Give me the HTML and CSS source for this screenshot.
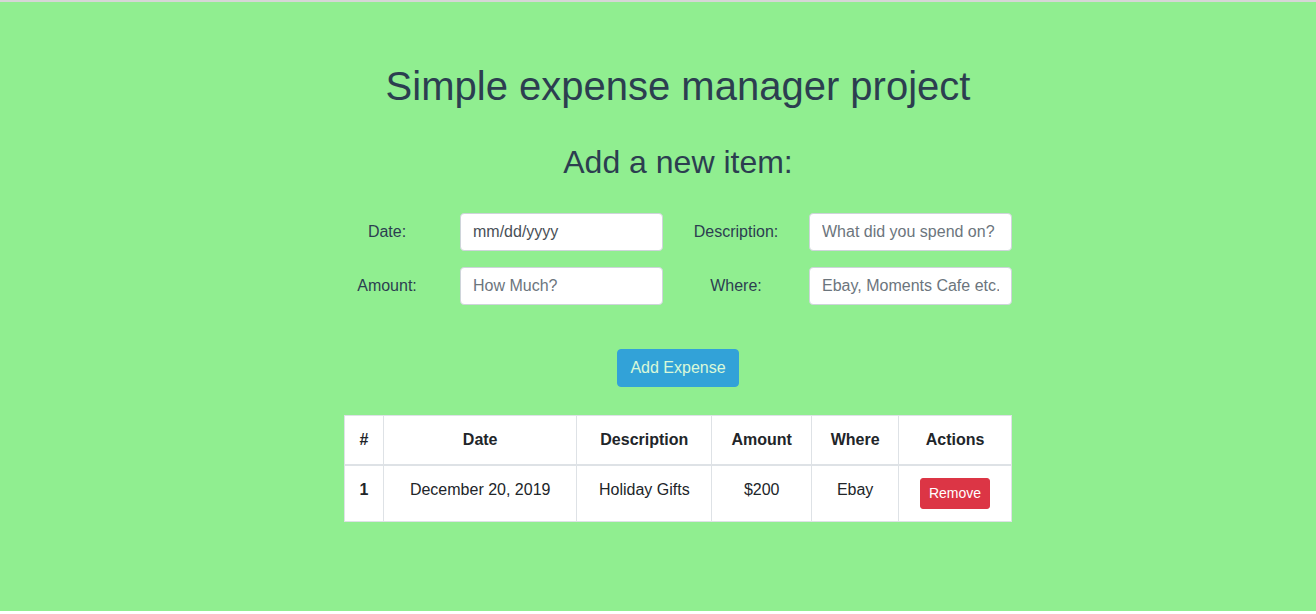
FILE: index.html
```html
<!DOCTYPE html>
<html lang="en">
<head>
<meta charset="utf-8">
<title>Simple expense manager project</title>
<link rel="stylesheet" href="styles.css">
</head>
<body>
<div class="frame">
  <main class="app">
    <h1 class="title">Simple expense manager project</h1>
    <h2 class="subtitle">Add a new item:</h2>
    <form class="form">
      <label class="label" for="date">Date:</label>
      <input class="control control-date" id="date" type="text" placeholder="mm/dd/yyyy">
      <label class="label" for="desc">Description:</label>
      <input class="control" id="desc" type="text" placeholder="What did you spend on?">
      <label class="label" for="amount">Amount:</label>
      <input class="control" id="amount" type="text" placeholder="How Much?">
      <label class="label" for="where">Where:</label>
      <input class="control" id="where" type="text" placeholder="Ebay, Moments Cafe etc.">
    </form>
    <button class="btn-add" type="button" disabled>Add Expense</button>
    <table class="table">
      <thead>
        <tr>
          <th class="c-num">#</th>
          <th class="c-date">Date</th>
          <th class="c-desc">Description</th>
          <th class="c-amt">Amount</th>
          <th class="c-where">Where</th>
          <th class="c-act">Actions</th>
        </tr>
      </thead>
      <tbody>
        <tr>
          <th>1</th>
          <td>December 20, 2019</td>
          <td>Holiday Gifts</td>
          <td>$200</td>
          <td>Ebay</td>
          <td><button class="btn-remove" type="button">Remove</button></td>
        </tr>
      </tbody>
    </table>
  </main>
</div>
</body>
</html>
```

FILE: styles.css
```css
* { box-sizing: border-box; }
html, body {
  margin: 0;
  padding: 0;
  background: #ffffff;
}
body {
  font-family: "Liberation Sans", Arial, sans-serif;
  font-size: 16px;
  line-height: 1.5;
  color: #212529;
}
.frame {
  border-top: 2px solid #d6d6d6;
}
.app {
  background: #90ee90;
  height: 609px;
  padding-left: 40px;
  display: flex;
  flex-direction: column;
  align-items: center;
  color: #2c3e50;
}
.title {
  margin: 60px 0 0;
  font-size: 40px;
  font-weight: 500;
  line-height: 1.2;
}
.subtitle {
  margin: 33px 0 0;
  font-size: 32px;
  font-weight: 500;
  line-height: 1.2;
}
.form {
  margin-top: 32px;
  display: grid;
  grid-template-columns: 86px 203px 86px 203px;
  column-gap: 30px;
  row-gap: 16px;
  align-items: center;
  width: 668px;
}
.label {
  text-align: center;
  color: #2c3e50;
  font-size: 16px;
}
.control {
  height: 38px;
  width: 100%;
  padding: 6px 12px;
  font-family: inherit;
  font-size: 16px;
  line-height: 1.5;
  color: #495057;
  background: #ffffff;
  border: 1px solid #ced4da;
  border-radius: 4px;
  outline: none;
}
.control::placeholder { color: #6c757d; opacity: 1; }
.control-date::placeholder { color: #495057; }
.btn-add {
  margin-top: 44px;
  height: 38px;
  padding: 6px 12px;
  font-family: inherit;
  font-size: 16px;
  line-height: 1.5;
  color: #ffffff;
  background: #007bff;
  border: 1px solid #007bff;
  border-radius: 4px;
  opacity: 0.65;
}
.table {
  margin-top: 28px;
  width: 668px;
  border-collapse: collapse;
  background: #ffffff;
  color: #212529;
  text-align: center;
}
.table th, .table td {
  border: 1px solid #dee2e6;
  padding: 12px;
  vertical-align: top;
}
.table thead th {
  border-bottom: 2px solid #dee2e6;
  vertical-align: bottom;
  font-weight: 700;
}
.table tbody th { font-weight: 700; }
.c-num { width: 39px; }
.c-date { width: 194px; }
.c-desc { width: 135px; }
.c-amt { width: 100px; }
.c-where { width: 87px; }
.c-act { width: 113px; }
.btn-remove {
  height: 31px;
  padding: 4px 8px;
  font-family: inherit;
  font-size: 14px;
  line-height: 1.5;
  color: #ffffff;
  background: #dc3545;
  border: 1px solid #dc3545;
  border-radius: 3px;
  vertical-align: top;
}
```
